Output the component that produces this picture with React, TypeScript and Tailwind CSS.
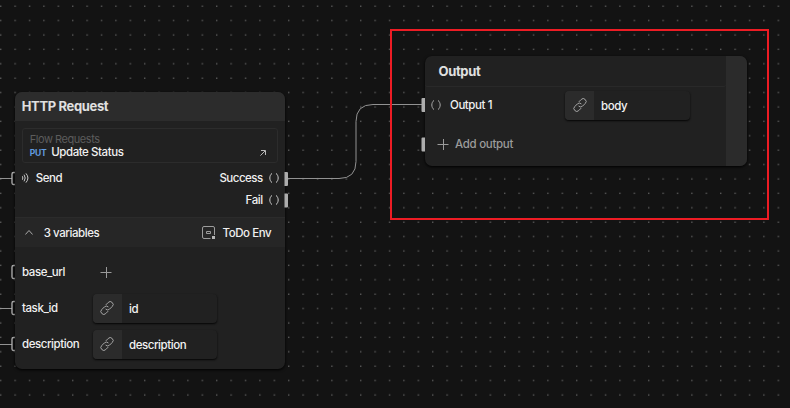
import React from 'react';

const font = "font-['Inter','Liberation_Sans',sans-serif]";

function Label({ children, className = 'tracking-[-0.43px]' }: { children: string; className?: string }) {
  return (
    <span className={`shrink-0 whitespace-nowrap text-[11.5px] font-[530] leading-[18px] ${className}`}>
      {children}
    </span>
  );
}

function Title({ children }: { children: string }) {
  return <h2 className="whitespace-nowrap text-[13px] font-bold leading-[18px] tracking-[-0.35px] text-[#e0e0e0]">{children}</h2>;
}

function LinkIcon() {
  return (
    <svg width="14" height="14" viewBox="0 0 14 14" fill="none" stroke="#a6a6a6" strokeWidth="1" strokeLinecap="round">
      <path d="M6.1 3.6 8.2 1.5a2.7 2.7 0 0 1 4 0 2.7 2.7 0 0 1 0 4L9.6 8.1a2.7 2.7 0 0 1-3.7.2" />
      <path d="M7.9 10.4l-2.1 2.1a2.7 2.7 0 0 1-4 0 2.7 2.7 0 0 1 0-4l2.6-2.6a2.7 2.7 0 0 1 3.7-.2" />
    </svg>
  );
}

function PlusIcon() {
  return (
    <svg width="12" height="12" viewBox="0 0 12 12" stroke="#9a9a9a" strokeWidth="1">
      <path d="M.5 6.5h11M6.5 1v11" />
    </svg>
  );
}

function Parens({ color = '#cccccc' }: { color?: string }) {
  return (
    <svg width="10" height="10" viewBox="0 0 10 10" fill="none" stroke={color} strokeWidth="1" strokeLinecap="round">
      <path d="M2.7.6C.1 2.6.1 7.4 2.7 9.4M7.3.6c2.6 2 2.6 6.8 0 8.8" />
    </svg>
  );
}

function LinkField({ text }: { text: string }) {
  return (
    <div className="flex h-[29px] w-[124.5px] items-center overflow-hidden rounded-[4px] bg-[#212121] shadow-[0_1px_2px_#050505]">
      <div className="flex h-full w-[29px] items-center justify-center bg-[#2b2b2b]">
        <LinkIcon />
      </div>
      <Label className="ml-[7px] pt-[2px] tracking-[-0.43px] text-[#f2f2f2]">{text}</Label>
    </div>
  );
}

function VariableRow({ name, children }: { name: string; children: React.ReactNode }) {
  return (
    <div className="flex h-9 items-center pl-[7.3px]">
      <div className="flex w-[71px]">
        <Label>{name}</Label>
      </div>
      {children}
    </div>
  );
}

function HttpNode() {
  return (
    <section className="absolute left-[14.7px] top-[92px] flex h-[277px] w-[270px] flex-col overflow-hidden rounded-[7px] bg-[#212121] text-[#f0f0f0] shadow-[0_1px_3px_#000]">
      <header className="flex h-[29px] shrink-0 items-center bg-[#2c2c2c] pb-[2px] pl-[7px]">
        <Title>HTTP Request</Title>
      </header>
      <div className="mx-[7px] mt-[7px] flex h-[35px] shrink-0 justify-between rounded-[3px] border border-[#2c2c2c] pl-[7px] pr-[11px]">
        <div className="flex flex-col pt-[3px]">
          <span className="h-[13px] text-[11px] leading-[14px] tracking-[-0.45px] text-[#5c5c5c]">Flow Requests</span>
          <div className="flex h-[14px] items-center">
            <span className="w-[21.5px] pt-px text-[8.5px] font-bold leading-[14px] tracking-[-0.2px] text-[#629bdf]">PUT</span>
            <Label>Update Status</Label>
          </div>
        </div>
        <svg className="mt-[21px]" width="6" height="6" viewBox="0 0 6 6" fill="none" stroke="#b9b9b9" strokeWidth="1">
          <path d="M.4 5.6 5.2.8M1 .5h4.500v4.500" />
        </svg>
      </div>
      <div className="mt-[4px] flex h-[22px] shrink-0 items-center justify-between pl-[7px] pr-[6px]">
        <div className="flex items-center gap-[7px]">
          <svg width="7" height="10" viewBox="0 0 7 10" fill="none" stroke="#c8c8c8" strokeWidth="1" strokeLinecap="round">
            <path d="M.5 3.5q1 1.5 0 3M2.3 2q2 3 0 6M4.2.7q3.7 4.3 0 8.6" />
          </svg>
          <Label>Send</Label>
        </div>
        <div className="flex items-center gap-[6px]">
          <Label className="tracking-[-0.5px]">Success</Label>
          <Parens />
        </div>
      </div>
      <div className="flex h-[22px] shrink-0 items-center justify-end gap-[6px] pr-[6px]">
        <Label>Fail</Label>
        <Parens />
      </div>
      <div className="mt-[6px] flex h-[30px] shrink-0 items-center justify-between border-t border-[#2b2b2b] bg-[#262626] pl-[10px] pr-[13.5px]">
        <div className="flex items-center gap-[11px]">
          <svg width="8" height="5" viewBox="0 0 8 5" fill="none" stroke="#aaa" strokeWidth="1"><path d="m.4 4.5 3.6-4 3.6 4" /></svg>
          <Label>3 variables</Label>
        </div>
        <div className="flex items-center gap-[6px]">
          <svg width="14" height="14" viewBox="0 0 14 14" fill="none" stroke="#9c9c9c">
            <path d="M8.500 12.500H2A1.500 1.500 0 0 1 .5 11V2A1.500 1.500 0 0 1 2 .5h9A1.500 1.500 0 0 1 12.500 2v7M4.500 5.500h4v2h-4z" />
            <path d="M10 10h3v3h-3z" fill="#b5b5b5" stroke="none" />
          </svg>
          <Label>ToDo Env</Label>
        </div>
      </div>
      <div className="pt-[7px]">
        <VariableRow name="base_url"><div className="pl-[7px]"><PlusIcon /></div></VariableRow>
        <VariableRow name="task_id"><LinkField text="id" /></VariableRow>
        <VariableRow name="description"><LinkField text="description" /></VariableRow>
      </div>
    </section>
  );
}

function OutputNode() {
  return (
    <section className="absolute left-[425px] top-[56px] flex h-[110px] w-[322px] overflow-hidden rounded-[7px] bg-[#212121] text-[#f0f0f0] shadow-[0_1px_3px_#000]">
      <div className="flex flex-1 flex-col">
        <header className="flex h-[31px] items-center rounded-b-[3px] border-b border-[#292929] pl-[13.5px]">
          <Title>Output</Title>
        </header>
        <div className="mt-[3px] flex h-[30px] items-center pl-[6px]">
          <Parens color="#a8a8a8" />
          <div className="ml-[9px] flex w-[115px]">
            <Label>Output 1</Label>
          </div>
          <LinkField text="body" />
        </div>
        <div className="mt-[13px] flex h-[22px] items-center gap-[6px] pl-3">
          <PlusIcon />
          <Label className="tracking-[-0.3px] text-[#9b9b9b]">Add output</Label>
        </div>
      </div>
      <div className="w-[21.5px] bg-[#2b2b2b]" />
    </section>
  );
}

function Wires() {
  return (
    <svg className="absolute inset-0" width="790" height="408" fill="none">
      <defs>
        <pattern id="dots" x="0" y="-0.8" width="14.4" height="14.4" patternUnits="userSpaceOnUse">
          <rect x="0.2" y="6.4" width="1.1" height="1.1" fill="#828282" />
        </pattern>
      </defs>
      <rect width="790" height="408" fill="url(#dots)" />
      <g stroke="#929292">
        <path d="M288 178.5H339Q356 178.5 356 161.5V121.5Q356 104.5 373 104.5H422" />
        <path d="M0 178.5H12M0 308.5H12M0 344.5H12" />
      </g>
      <g fill="#101010" stroke="#b4b4b4" strokeWidth="1.3">
        <path d="M16 172.5h-2.5q-1.5 0-1.5 1.5v9q0 1.5 1.5 1.5H16M16 265.5h-2.5q-1.5 0-1.5 1.5v10q0 1.5 1.5 1.5H16M16 301.5h-2.5q-1.5 0-1.5 1.5v10q0 1.5 1.5 1.5H16M16 337.5h-2.5q-1.5 0-1.5 1.5v10q0 1.5 1.5 1.5H16" />
      </g>
    </svg>
  );
}

function Ports() {
  return (
    <svg className="pointer-events-none absolute inset-0" width="790" height="408" fill="#adadad">
      <path d="M284.5 172h2.5q1 0 1 1v12q0 1-1 1h-2.5zM284.5 193.5h2.5q1 0 1 1v12q0 1-1 1h-2.5z" />
      <path d="M425 98h-2.5q-1 0-1 1v12q0 1 1 1h2.5zM425 137.5h-2.5q-1 0-1 1v12q0 1 1 1h2.5z" />
    </svg>
  );
}

export default function App() {
  return (
    <main className={`relative h-[408px] w-[790px] overflow-hidden bg-[#131313] ${font}`}>
      <Wires />
      <HttpNode />
      <OutputNode />
      <Ports />
      <div className="absolute left-[390px] top-[29px] h-[191px] w-[379px] border-2 border-[#ed1c24]" />
    </main>
  );
}
